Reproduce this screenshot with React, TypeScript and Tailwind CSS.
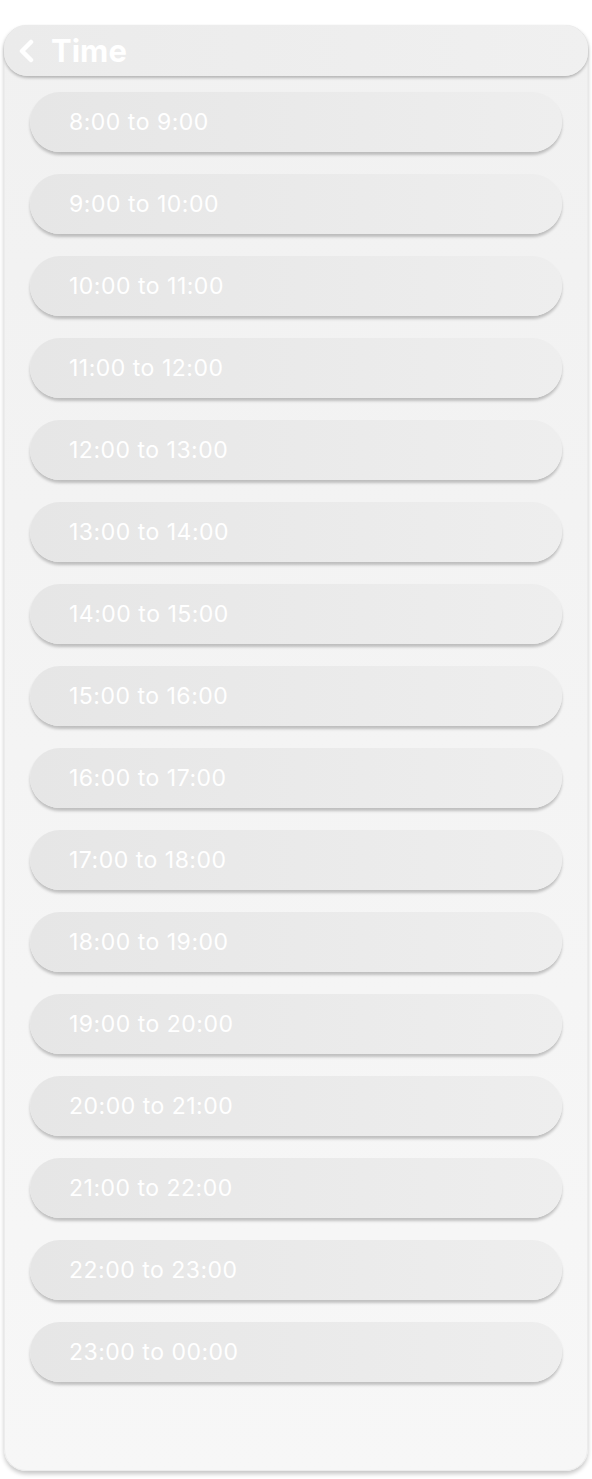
const slots = [
  "8:00 to 9:00",
  "9:00 to 10:00",
  "10:00 to 11:00",
  "11:00 to 12:00",
  "12:00 to 13:00",
  "13:00 to 14:00",
  "14:00 to 15:00",
  "15:00 to 16:00",
  "16:00 to 17:00",
  "17:00 to 18:00",
  "18:00 to 19:00",
  "19:00 to 20:00",
  "20:00 to 21:00",
  "21:00 to 22:00",
  "22:00 to 23:00",
  "23:00 to 00:00"
];

export default function App() {
  return (
    <div
      className="min-h-[1479px] bg-white px-[4px] pt-[25px]"
      style={{ fontFamily: "Inter, 'Noto Sans', sans-serif" }}
    >
      <div className="h-[1446px] rounded-[22px] border border-[#ececec] bg-gradient-to-b from-[#f1f1f1] to-[#f7f7f7] shadow-[0_3px_4px_rgba(0,0,0,0.22)]">
        <div className="-mx-px -mt-px flex h-[51px] items-center rounded-[24px] bg-gradient-to-r from-[#ebebeb] to-[#f0f0f0] shadow-[0_2px_3px_rgba(0,0,0,0.25)]">
          <svg
            width="16"
            height="24"
            viewBox="0 0 16 24"
            className="ml-[14px]"
            fill="none"
          >
            <path
              d="M13 3 L4 12 L13 21"
              stroke="white"
              strokeWidth="4.5"
              strokeLinecap="round"
              strokeLinejoin="round"
            />
          </svg>
          <span className="ml-[17px] text-[31px] font-bold leading-none text-white">
            Time
          </span>
        </div>
        <div className="flex flex-col gap-[22px] px-[25px] pt-[16px]">
          {slots.map((s) => (
            <div
              key={s}
              className="flex h-[60px] items-center rounded-full bg-gradient-to-r from-[#e6e6e6] to-[#eeeeee] pl-[39px] shadow-[0_3px_3px_rgba(0,0,0,0.22)]"
            >
              <span className="text-[23px] font-normal tracking-[0.5px] text-white">
                {s}
              </span>
            </div>
          ))}
        </div>
      </div>
    </div>
  );
}
